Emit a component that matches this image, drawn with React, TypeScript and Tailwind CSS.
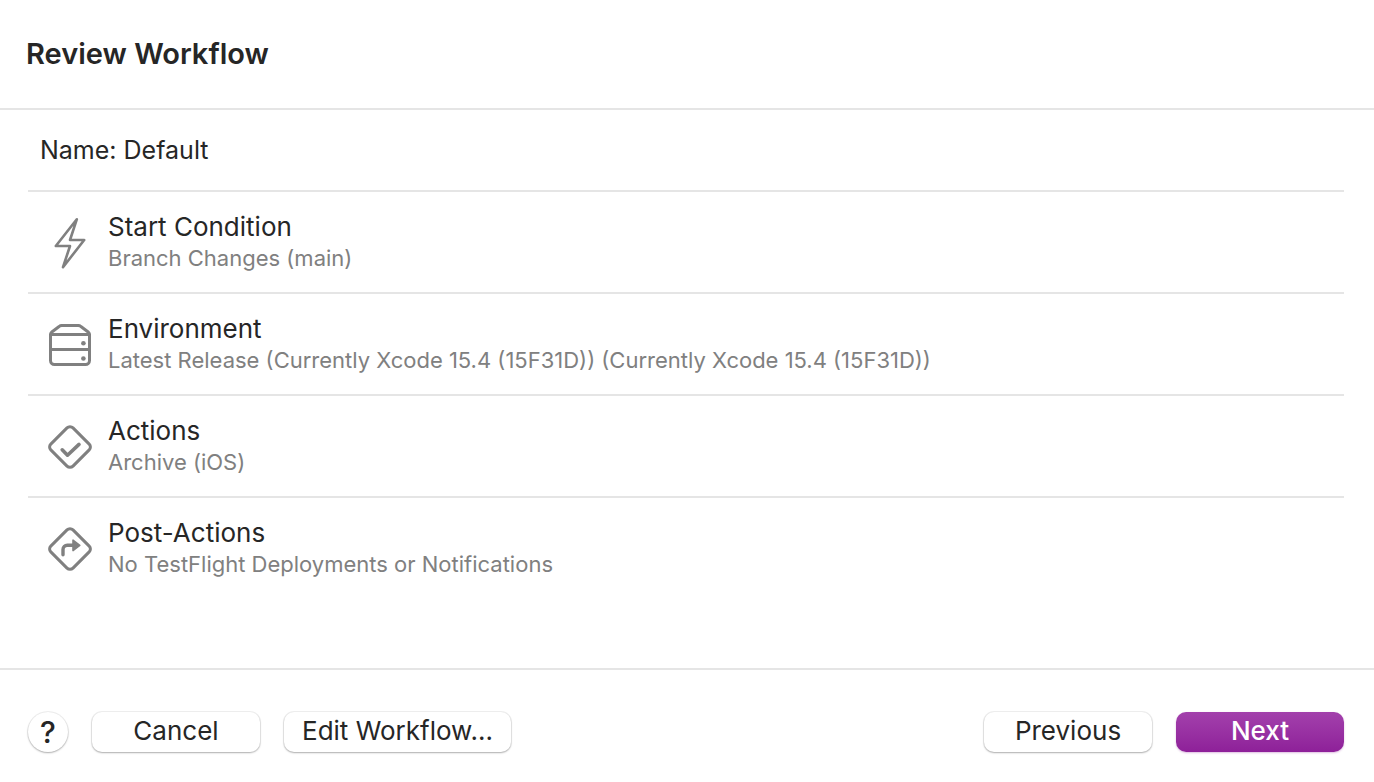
import type { ReactNode } from "react";

const iconProps = {
  width: 48,
  height: 56,
  viewBox: "0 0 48 56",
  fill: "none",
  stroke: "#808080",
  strokeWidth: 3,
  strokeLinejoin: "round" as const,
  strokeLinecap: "round" as const,
  "aria-hidden": true,
};

function BoltIcon() {
  return (
    <svg {...iconProps} strokeWidth={2.6}>
      <path d="M30.8 4.3 9.8 31H24L17 52.2 38.2 25H24Z" />
    </svg>
  );
}

function ServerIcon() {
  return (
    <svg {...iconProps}>
      <path d="M4.5 17.5v26a4 4 0 0 0 4 4h31a4 4 0 0 0 4-4v-26a3 3 0 0 0-1-2.2l-7.6-5.8a4 4 0 0 0-2.6-1H15.7a4 4 0 0 0-2.6 1l-7.6 5.8a3 3 0 0 0-1 2.2Z" />
      <path d="M5 17.5h38M5 32.5h38" />
      <circle cx="37.4" cy="26.3" r="2.3" fill="#808080" stroke="none" />
      <circle cx="37.4" cy="41.5" r="2.3" fill="#808080" stroke="none" />
    </svg>
  );
}

function Diamond() {
  return (
    <path d="m21 8.9-16.2 16.2a4.1 4.1 0 0 0 0 5.8l16.2 16.2a4.2 4.2 0 0 0 6 0l16.2-16.2a4.1 4.1 0 0 0 0-5.8l-16.2-16.2a4.2 4.2 0 0 0-6 0Z" />
  );
}

function CheckIcon() {
  return (
    <svg {...iconProps}>
      <Diamond />
      <path d="m16.2 30.8 5.3 5.4L33 25.4" strokeWidth={3.6} />
    </svg>
  );
}

function TurnIcon() {
  return (
    <svg {...iconProps}>
      <Diamond />
      <path d="M17 33.8V28.600a4.300 4.300 0 0 1 4.300-4.300H27" strokeWidth={3.4} />
      <path d="M27 19.200v10.400l6.800-5.200Z" fill="#808080" strokeWidth={1.600} />
    </svg>
  );
}

const steps: { title: string; detail: string; icon: ReactNode }[] = [
  { title: "Start Condition", detail: "Branch Changes (main)", icon: <BoltIcon /> },
  {
    title: "Environment",
    detail: "Latest Release (Currently Xcode 15.4 (15F31D)) (Currently Xcode 15.4 (15F31D))",
    icon: <ServerIcon />,
  },
  { title: "Actions", detail: "Archive (iOS)", icon: <CheckIcon /> },
  { title: "Post-Actions", detail: "No TestFlight Deployments or Notifications", icon: <TurnIcon /> },
];

const plain =
  "h-10 rounded-[10px] bg-white pb-0.5 text-[26px] leading-8 shadow-[0_0_0_1px_rgba(0,0,0,0.06),0_1px_2px_rgba(0,0,0,0.28)]";

export default function App() {
  return (
    <div className="flex min-h-screen flex-col bg-white font-['Inter','Liberation_Sans',sans-serif] text-[#262626]">
      <header className="border-b-2 border-[#e5e5e5] px-[26px] pt-[34px] pb-[34px]">
        <h1 className="text-[29px] leading-10 font-semibold">Review Workflow</h1>
      </header>

      <main className="flex-1 pr-[30px] pb-16 pl-7">
        <p className="px-3 pt-[22px] pb-[22px] text-[25px] leading-9">Name: Default</p>
        <ul>
          {steps.map((step) => (
            <li key={step.title} className="flex gap-3 border-t-2 border-[#e5e5e5] py-[19px] pl-[18px]">
              <div className="flex h-[62px] items-center pt-0.5">{step.icon}</div>
              <div className="pl-0.5">
                <h2 className="text-[26px] leading-8">{step.title}</h2>
                <p className="text-[22px] leading-[30px] text-[#808080]">{step.detail}</p>
              </div>
            </li>
          ))}
        </ul>
      </main>

      <footer className="flex items-center border-t-2 border-[#e5e5e5] pt-[42px] pr-[30px] pb-[30px] pl-7">
        <button
          type="button"
          aria-label="Help"
          className="size-10 rounded-full bg-white text-[30px] leading-9 font-medium shadow-[0_0_0_1px_rgba(0,0,0,0.06),0_1px_2px_rgba(0,0,0,0.28)]"
        >
          ?
        </button>
        <button type="button" className={`${plain} ml-6 w-42`}>
          Cancel
        </button>
        <button type="button" className={`${plain} ml-6 px-[18px]`}>
          Edit Workflow...
        </button>
        <button type="button" className={`${plain} ml-auto w-42`}>
          Previous
        </button>
        <button
          type="button"
          className="ml-6 h-10 w-42 rounded-[10px] bg-linear-to-b from-[#a340ac] to-[#8e2099] pb-0.5 text-[26px] leading-8 font-medium text-white shadow-[0_1px_2px_rgba(142,32,153,0.3)]"
        >
          Next
        </button>
      </footer>
    </div>
  );
}
